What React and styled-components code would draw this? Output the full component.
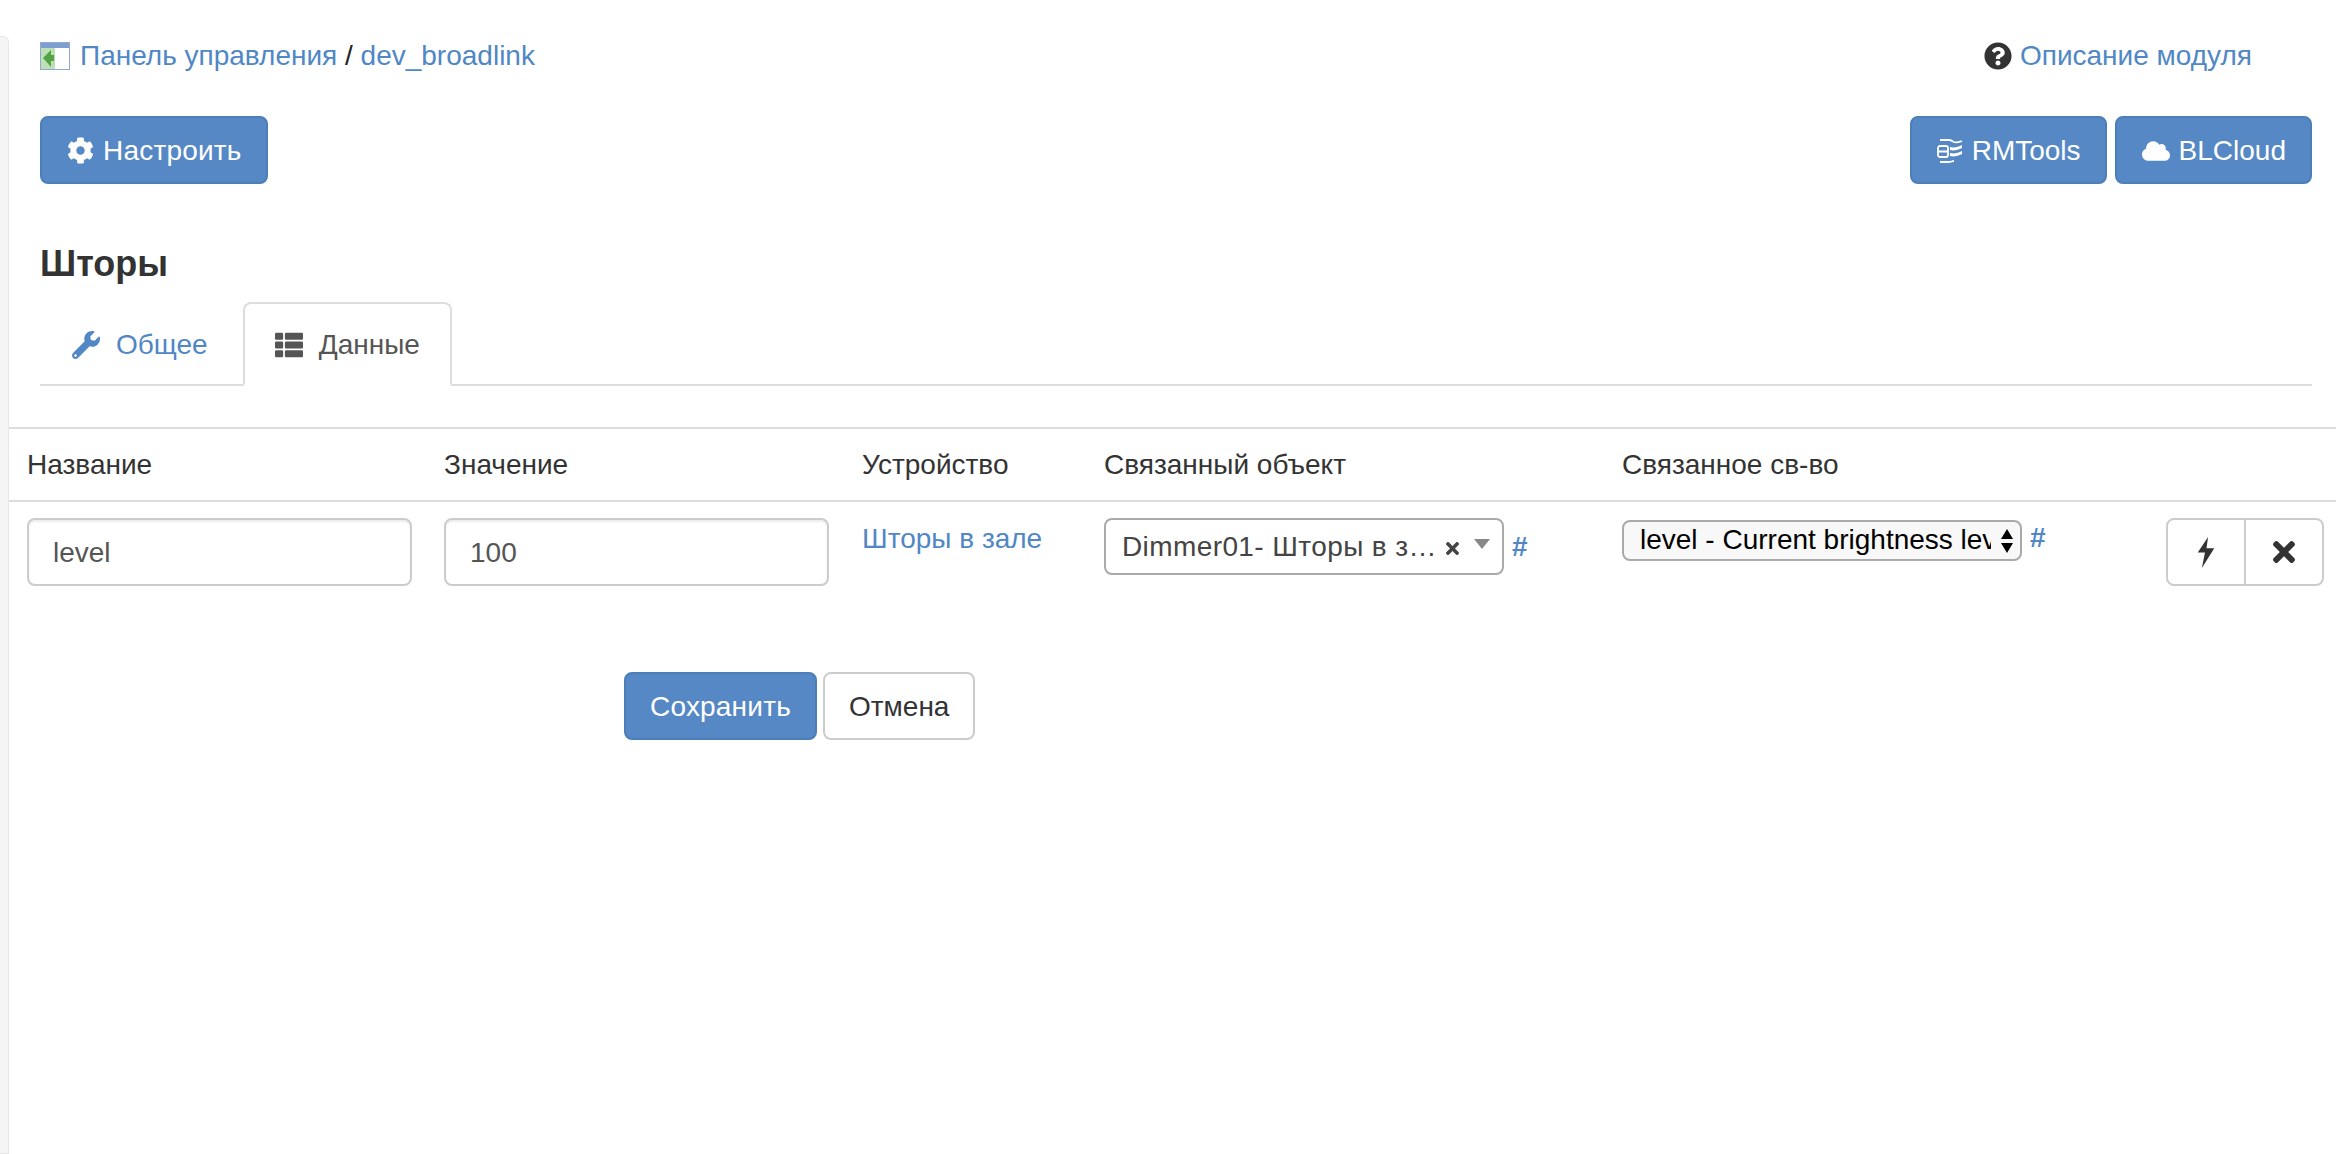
import React from 'react';
import styled, { createGlobalStyle } from 'styled-components';
import { FaCog, FaWrench, FaThList, FaTimes, FaQuestionCircle, FaCloud } from 'react-icons/fa';

const GlobalStyle = createGlobalStyle`
  html, body {
    margin: 0;
    padding: 0;
    background: #fff;
    color: #333;
    font-family: "Liberation Sans", Arial, sans-serif;
    font-size: 28px;
    line-height: 40px;
  }
  * { box-sizing: border-box; }
`;

const linkBlue = '#5087c4';
const btnBlue = '#5588c4';

const Page = styled.div`
  display: flex;
  width: 2336px;
  height: 1154px;
  overflow: hidden;
`;

const SideEdge = styled.div`
  flex: 0 0 9px;
  margin-top: 36px;
  background: #f5f5f5;
  border: 1px solid #e8e8e8;
  border-left: 0;
  border-top-right-radius: 6px;
`;

const Main = styled.div`
  flex: 1;
  min-width: 0;
`;

const Head = styled.div`
  padding: 36px 24px 0 31px;
`;

const TopLine = styled.div`
  display: flex;
  justify-content: space-between;
  height: 40px;
  padding-right: 60px;
`;

const Crumbs = styled.div`
  display: flex;
  align-items: center;
  color: #222;
  white-space: pre;
`;

const Link = styled.a`
  color: ${linkBlue};
  text-decoration: none;
`;

const DeviceLink = styled(Link)`
  padding-top: 1px;
`;

const HelpIcon = styled(FaQuestionCircle)`
  width: 28px;
  height: 28px;
  color: #333;
  margin-right: 8px;
`;

const Toolbar = styled.div`
  display: flex;
  justify-content: space-between;
  margin-top: 40px;
`;

const Group = styled.div`
  display: flex;
  gap: 8px;
`;

const Button = styled.button`
  display: inline-flex;
  align-items: center;
  justify-content: center;
  height: 68px;
  padding: 1px ${(p) => (p.$compact ? '24px' : '24px')} 0 ${(p) => (p.$compact ? '24px' : '25px')};
  border: 2px solid ${(p) => (p.$plain ? '#ccc' : '#4c7fb8')};
  border-radius: 8px;
  background: ${(p) => (p.$plain ? '#fff' : btnBlue)};
  color: ${(p) => (p.$plain ? '#333' : '#fff')};
  font: inherit;
  line-height: 40px;
  letter-spacing: ${(p) => (p.$spaced ? '0.2px' : '0')};
  svg { flex: none; margin-right: 9px; }
`;

const Title = styled.h4`
  margin: 60px 0 0;
  font-size: 36px;
  line-height: 40px;
  font-weight: 700;
  color: #333;
`;

const Tabs = styled.div`
  display: flex;
  height: 84px;
  margin-top: 18px;
  border-bottom: 2px solid #ddd;
`;

const Tab = styled.a`
  display: flex;
  align-items: center;
  height: 84px;
  margin-right: 3px;
  padding: 1px 30px 0;
  border: 2px solid ${(p) => (p.$active ? '#ddd' : 'transparent')};
  border-bottom-color: ${(p) => (p.$active ? '#fff' : 'transparent')};
  border-radius: 8px 8px 0 0;
  color: ${(p) => (p.$active ? '#555' : linkBlue)};
  text-decoration: none;
  svg { flex: none; margin-right: 16px; }
`;

const Row = styled.div`
  display: grid;
  grid-template-columns: 417px 418px 242px 518px 544px 1fr;
  padding-left: 18px;
  border-top: 2px solid #ddd;
  align-items: start;
`;

const HeadRow = styled(Row)`
  margin-top: 41px;
  height: 73px;
  padding-top: 16px;
`;

const BodyRow = styled(Row)`
  padding-top: 16px;
`;

const TextInput = styled.div`
  width: 385px;
  height: 68px;
  padding: 13px 24px 0;
  border: 2px solid #ccc;
  border-radius: 8px;
  background: #fff;
  box-shadow: inset 0 2px 2px rgba(0, 0, 0, 0.075);
  color: #555;
`;

const ComboCell = styled.div`
  display: flex;
  align-items: flex-start;
`;

const Combo = styled.div`
  display: flex;
  align-items: center;
  width: 400px;
  height: 57px;
  padding: 0 12px 0 16px;
  border: 2px solid #aaa;
  border-radius: 8px;
  background: #fff;
  color: #444;
  line-height: 52px;
`;

const ComboText = styled.span`
  flex: 1;
  min-width: 0;
  white-space: nowrap;
  letter-spacing: 0.4px;
`;

const ComboClear = styled(FaTimes)`
  width: 19px;
  height: 19px;
  color: #444;
  margin: 3px 12px 0 0;
`;

const ComboArrow = styled.span`
  width: 0;
  height: 0;
  margin-top: -6px;
  border-left: 8px solid transparent;
  border-right: 8px solid transparent;
  border-top: 10px solid #888;
`;

const Hash = styled(Link)`
  margin-left: 8px;
  font-size: 28px;
  font-weight: 700;
  line-height: ${(p) => p.$line}px;
`;

const NativeSelect = styled.div`
  position: relative;
  width: 400px;
  height: 41px;
  margin-top: 2px;
  padding-left: 16px;
  border: 2px solid #aaa;
  border-radius: 8px;
  background: #f8f8f8;
  color: #000;
  font-size: 28px;
  line-height: 36px;
  overflow: hidden;
`;

const NativeText = styled.div`
  width: 351px;
  overflow: hidden;
  white-space: nowrap;
`;

const UpDown = styled.svg`
  position: absolute;
  top: 6px;
  right: 6px;
  width: 14px;
  height: 26px;
`;

const ActionCell = styled.div`
  display: flex;
  justify-content: flex-end;
  padding-right: 12px;
`;

const ActionGroup = styled.div`
  display: flex;
`;

const ActionButton = styled.button`
  display: flex;
  align-items: center;
  justify-content: center;
  width: ${(p) => (p.$first ? 80 : 80)}px;
  height: 68px;
  padding: 0;
  margin-left: ${(p) => (p.$first ? 0 : -2)}px;
  border: 2px solid #ccc;
  border-radius: ${(p) => (p.$first ? '8px 0 0 8px' : '0 8px 8px 0')};
  background: #fff;
  color: #333;
`;

const Footer = styled.div`
  display: flex;
  gap: 6px;
  margin: 86px 0 0 615px;
`;

function RmIcon() {
  return (
    <svg width="26" height="24" viewBox="0 0 26 24" fill="none" stroke="#fff" strokeWidth="1.800">
      <path d="M3 1h9c2 0 3 1 5 2 3 1 5 0 8-1" />
      <rect x="1" y="7" width="10" height="11" rx="2" />
      <path d="M1 12.500h10M3 23h9c2 0 3-1 5-1" />
      <path d="M13 8c4 1 8 0 12-2v3c-4 2-8 3-12 2zM13 14c4 1 8 0 12-2v3c-4 2-8 3-12 2z" fill="#fff" stroke="none" />
    </svg>
  );
}

function BoltIcon() {
  return (
    <svg width="20" height="31" viewBox="0 0 18 30" fill="#333">
      <path d="M11 0 1 15h7L5 30 17 11H9.500z" />
    </svg>
  );
}

function PanelIcon() {
  return (
    <svg width="30" height="28" viewBox="0 0 30 28" style={{ marginRight: 10 }}>
      <rect x="0.500" y="0.500" width="29" height="27" fill="#fff" stroke="#8ea9d3" />
      <rect x="1" y="1" width="28" height="5" fill="#7f9fd0" />
      <rect x="1" y="6" width="14" height="21" fill="#bfe0b4" />
      <path d="M3 16 11 8v5h3v6h-3v6z" fill="#54a447" />
    </svg>
  );
}

export default function App() {
  return (
    <Page>
      <GlobalStyle />
      <SideEdge />
      <Main>
        <Head>
          <TopLine>
            <Crumbs>
              <PanelIcon />
              <Link href="#">Панель управления</Link> / <Link href="#">dev_broadlink</Link>
            </Crumbs>
            <Crumbs>
              <HelpIcon />
              <Link href="#">Описание модуля</Link>
            </Crumbs>
          </TopLine>
          <Toolbar>
            <Button $spaced><FaCog size={27} />Настроить</Button>
            <Group>
              <Button><RmIcon />RMTools</Button>
              <Button><FaCloud size={28} />BLCloud</Button>
            </Group>
          </Toolbar>
          <Title>Шторы</Title>
          <Tabs>
            <Tab href="#"><FaWrench size={28} />Общее</Tab>
            <Tab href="#" $active><FaThList size={28} />Данные</Tab>
          </Tabs>
        </Head>
        <HeadRow>
          <div>Название</div>
          <div>Значение</div>
          <div>Устройство</div>
          <div>Связанный объект</div>
          <div>Связанное св-во</div>
        </HeadRow>
        <BodyRow>
          <TextInput>level</TextInput>
          <TextInput>100</TextInput>
          <DeviceLink href="#">Шторы в зале</DeviceLink>
          <ComboCell>
            <Combo>
              <ComboText>Dimmer01- Шторы в з…</ComboText>
              <ComboClear />
              <ComboArrow />
            </Combo>
            <Hash href="#" $line={57}>#</Hash>
          </ComboCell>
          <ComboCell>
            <NativeSelect>
              <NativeText>level - Current brightness level</NativeText>
              <UpDown viewBox="0 0 14 26" fill="#000">
                <path d="M7 1 13 11H1zM7 25 1 15h12z" />
              </UpDown>
            </NativeSelect>
            <Hash href="#" $line={40}>#</Hash>
          </ComboCell>
          <ActionCell>
            <ActionGroup>
              <ActionButton $first><BoltIcon /></ActionButton>
              <ActionButton><FaTimes size={32} /></ActionButton>
            </ActionGroup>
          </ActionCell>
        </BodyRow>
        <Footer>
          <Button $compact $spaced>Сохранить</Button>
          <Button $compact $plain>Отмена</Button>
        </Footer>
      </Main>
    </Page>
  );
}
